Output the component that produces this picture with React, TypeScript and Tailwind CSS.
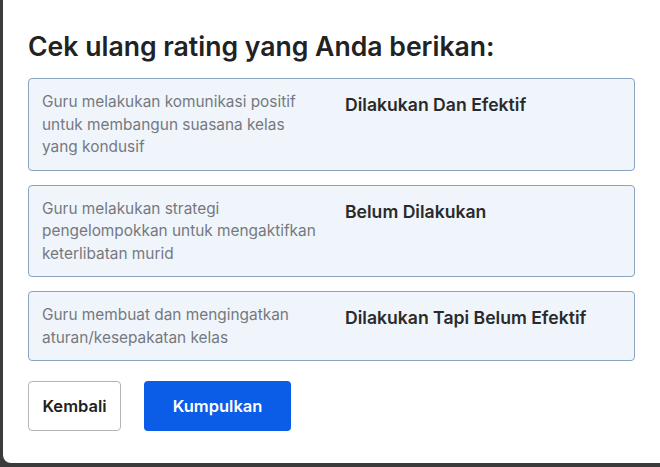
const items = [
  { label: "Guru melakukan komunikasi positif untuk membangun suasana kelas yang kondusif", value: "Dilakukan Dan Efektif" },
  { label: "Guru melakukan strategi pengelompokkan untuk mengaktifkan keterlibatan murid", value: "Belum Dilakukan" },
  { label: "Guru membuat dan mengingatkan aturan/kesepakatan kelas", value: "Dilakukan Tapi Belum Efektif" },
];

export default function App() {
  return (
    <div className="w-[660px] h-[467px] bg-[#3b3b3b] overflow-hidden font-['Inter',sans-serif]">
      <div className="ml-[3px] h-[463px] bg-white rounded-bl-lg pt-[29px] pl-[25px] pr-[25px]">
        <h1 className="text-[26.6px] leading-[34px] font-semibold text-[#222]">
          Cek ulang rating yang Anda berikan:
        </h1>
        <div className="mt-[15px] flex flex-col gap-[14px]">
          {items.map((it) => (
            <div key={it.value} className="flex gap-[23px] border border-[#8aa3c2] bg-[#f0f5fb] rounded-[4px] pl-[13px] pr-3 pt-3 pb-[11px]">
              <div className="w-[280px] text-[15.4px] leading-[22.5px] text-[#75797f]">{it.label}</div>
              <div className="flex-1 pt-[2px] text-[17.6px] leading-[24px] font-semibold text-[#2a2a2a]">{it.value}</div>
            </div>
          ))}
        </div>
        <div className="mt-[20px] flex gap-[23px]">
          <button className="w-[93px] h-[50px] border border-[#b5b5b5] rounded-[4px] bg-white text-[16.5px] font-semibold text-[#222]">
            Kembali
          </button>
          <button className="w-[147px] h-[50px] rounded-[4px] bg-[#0b5ce6] text-[16.5px] font-semibold text-white">
            Kumpulkan
          </button>
        </div>
      </div>
    </div>
  );
}
